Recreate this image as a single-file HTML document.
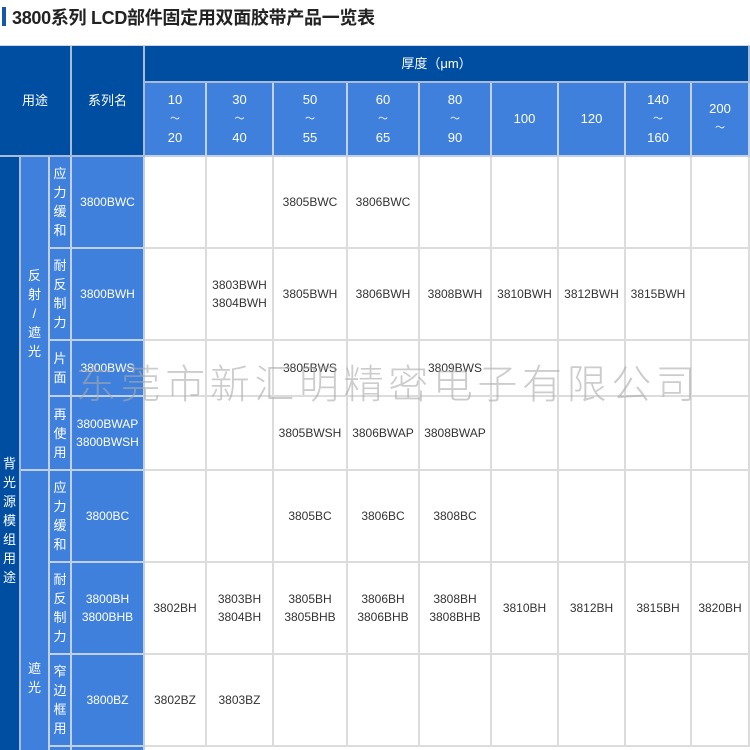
<!DOCTYPE html>
<html><head><meta charset="utf-8"><style>
html,body{margin:0;width:750px;height:750px;overflow:hidden}
body{background:#fff;position:relative;font-family:"Liberation Sans","Noto Sans CJK SC",sans-serif}
.c{position:absolute;display:flex;align-items:center;justify-content:center;text-align:center;box-sizing:border-box;border-right:2px solid #dcdcdc;border-bottom:2px solid #dcdcdc;font-size:12px;line-height:18px;color:#333}
.d{background:#004ea2;color:#fff;border-color:#a9bbd6}
.l{background:#3f80dd;color:#fff;border-color:#c2d0e6}
.v{font-size:13px;line-height:19px;word-break:break-all;padding:0 4px}
.t{position:absolute;left:12px;top:4px;font-size:18px;font-weight:bold;color:#222;letter-spacing:-0.3px}
.bar{position:absolute;left:2px;top:7px;width:4px;height:19px;background:#1456b0}
.wm{position:absolute;left:76px;top:352px;font-size:40px;letter-spacing:4.6px;color:rgba(170,170,170,0.6);white-space:nowrap;font-family:"Noto Sans CJK SC",sans-serif;font-weight:300}
s{text-decoration:none;font-size:10px}
</style></head><body>
<div class="bar"></div><div class="t">3800系列 LCD部件固定用双面胶带产品一览表</div>
<div style="position:absolute;left:0;top:45px;width:750px;height:1px;background:#cfd6e0"></div>
<div class="c d" style="left:0;top:46px;width:72px;height:111px;font-size:13px">用途</div>
<div class="c d" style="left:72px;top:46px;width:73px;height:111px;font-size:13px">系列名</div>
<div class="c d" style="left:145px;top:46px;width:605px;height:37px;font-size:13px;padding-right:20px">厚度（μm）</div>
<div class="c l" style="left:145px;top:83px;width:62px;height:74px;font-size:13px"><div>10<br><s>～</s><br>20</div></div>
<div class="c l" style="left:207px;top:83px;width:67px;height:74px;font-size:13px"><div>30<br><s>～</s><br>40</div></div>
<div class="c l" style="left:274px;top:83px;width:74px;height:74px;font-size:13px"><div>50<br><s>～</s><br>55</div></div>
<div class="c l" style="left:348px;top:83px;width:72px;height:74px;font-size:13px"><div>60<br><s>～</s><br>65</div></div>
<div class="c l" style="left:420px;top:83px;width:72px;height:74px;font-size:13px"><div>80<br><s>～</s><br>90</div></div>
<div class="c l" style="left:492px;top:83px;width:67px;height:74px;font-size:13px">100</div>
<div class="c l" style="left:559px;top:83px;width:67px;height:74px;font-size:13px">120</div>
<div class="c l" style="left:626px;top:83px;width:66px;height:74px;font-size:13px"><div>140<br><s>～</s><br>160</div></div>
<div class="c l" style="left:692px;top:83px;width:58px;height:74px;font-size:13px"><div>200<br><s>～</s></div></div>
<div class="c d v" style="left:0;top:157px;width:21px;height:600px;align-items:flex-start;padding:297px 2px 0">背光源模组用途</div>
<div class="c l v" style="left:21px;top:157px;width:29px;height:314px;padding:0 4px"><div>反<br>射<br>/<br>遮<br>光</div></div>
<div class="c l v" style="left:21px;top:471px;width:29px;height:290px;align-items:flex-start;padding:188px 6px 0">遮光</div>
<div class="c l v" style="left:50px;top:157px;width:22px;height:92px;padding:0 2px">应力缓和</div>
<div class="c l v" style="left:50px;top:249px;width:22px;height:92px;padding:0 2px">耐反制力</div>
<div class="c l v" style="left:50px;top:341px;width:22px;height:56px;padding:0 2px">片面</div>
<div class="c l v" style="left:50px;top:397px;width:22px;height:74px;padding:0 2px">再使用</div>
<div class="c l v" style="left:50px;top:471px;width:22px;height:92px;padding:0 2px">应力缓和</div>
<div class="c l v" style="left:50px;top:563px;width:22px;height:92px;padding:0 2px">耐反制力</div>
<div class="c l v" style="left:50px;top:655px;width:22px;height:92px;padding:0 2px">窄边框用</div>
<div class="c l" style="left:50px;top:747px;width:22px;height:10px"></div>
<div class="c l" style="left:72px;top:157px;width:73px;height:92px">3800BWC</div>
<div class="c l" style="left:72px;top:249px;width:73px;height:92px">3800BWH</div>
<div class="c l" style="left:72px;top:341px;width:73px;height:56px">3800BWS</div>
<div class="c l" style="left:72px;top:397px;width:73px;height:74px">3800BWAP<br>3800BWSH</div>
<div class="c l" style="left:72px;top:471px;width:73px;height:92px">3800BC</div>
<div class="c l" style="left:72px;top:563px;width:73px;height:92px">3800BH<br>3800BHB</div>
<div class="c l" style="left:72px;top:655px;width:73px;height:92px">3800BZ</div>
<div class="c l" style="left:72px;top:747px;width:73px;height:10px"></div>
<div class="c" style="left:145px;top:157px;width:62px;height:92px"></div>
<div class="c" style="left:207px;top:157px;width:67px;height:92px"></div>
<div class="c" style="left:274px;top:157px;width:74px;height:92px">3805BWC</div>
<div class="c" style="left:348px;top:157px;width:72px;height:92px">3806BWC</div>
<div class="c" style="left:420px;top:157px;width:72px;height:92px"></div>
<div class="c" style="left:492px;top:157px;width:67px;height:92px"></div>
<div class="c" style="left:559px;top:157px;width:67px;height:92px"></div>
<div class="c" style="left:626px;top:157px;width:66px;height:92px"></div>
<div class="c" style="left:692px;top:157px;width:58px;height:92px"></div>
<div class="c" style="left:145px;top:249px;width:62px;height:92px"></div>
<div class="c" style="left:207px;top:249px;width:67px;height:92px">3803BWH<br>3804BWH</div>
<div class="c" style="left:274px;top:249px;width:74px;height:92px">3805BWH</div>
<div class="c" style="left:348px;top:249px;width:72px;height:92px">3806BWH</div>
<div class="c" style="left:420px;top:249px;width:72px;height:92px">3808BWH</div>
<div class="c" style="left:492px;top:249px;width:67px;height:92px">3810BWH</div>
<div class="c" style="left:559px;top:249px;width:67px;height:92px">3812BWH</div>
<div class="c" style="left:626px;top:249px;width:66px;height:92px">3815BWH</div>
<div class="c" style="left:692px;top:249px;width:58px;height:92px"></div>
<div class="c" style="left:145px;top:341px;width:62px;height:56px"></div>
<div class="c" style="left:207px;top:341px;width:67px;height:56px"></div>
<div class="c" style="left:274px;top:341px;width:74px;height:56px">3805BWS</div>
<div class="c" style="left:348px;top:341px;width:72px;height:56px"></div>
<div class="c" style="left:420px;top:341px;width:72px;height:56px">3809BWS</div>
<div class="c" style="left:492px;top:341px;width:67px;height:56px"></div>
<div class="c" style="left:559px;top:341px;width:67px;height:56px"></div>
<div class="c" style="left:626px;top:341px;width:66px;height:56px"></div>
<div class="c" style="left:692px;top:341px;width:58px;height:56px"></div>
<div class="c" style="left:145px;top:397px;width:62px;height:74px"></div>
<div class="c" style="left:207px;top:397px;width:67px;height:74px"></div>
<div class="c" style="left:274px;top:397px;width:74px;height:74px">3805BWSH</div>
<div class="c" style="left:348px;top:397px;width:72px;height:74px">3806BWAP</div>
<div class="c" style="left:420px;top:397px;width:72px;height:74px">3808BWAP</div>
<div class="c" style="left:492px;top:397px;width:67px;height:74px"></div>
<div class="c" style="left:559px;top:397px;width:67px;height:74px"></div>
<div class="c" style="left:626px;top:397px;width:66px;height:74px"></div>
<div class="c" style="left:692px;top:397px;width:58px;height:74px"></div>
<div class="c" style="left:145px;top:471px;width:62px;height:92px"></div>
<div class="c" style="left:207px;top:471px;width:67px;height:92px"></div>
<div class="c" style="left:274px;top:471px;width:74px;height:92px">3805BC</div>
<div class="c" style="left:348px;top:471px;width:72px;height:92px">3806BC</div>
<div class="c" style="left:420px;top:471px;width:72px;height:92px">3808BC</div>
<div class="c" style="left:492px;top:471px;width:67px;height:92px"></div>
<div class="c" style="left:559px;top:471px;width:67px;height:92px"></div>
<div class="c" style="left:626px;top:471px;width:66px;height:92px"></div>
<div class="c" style="left:692px;top:471px;width:58px;height:92px"></div>
<div class="c" style="left:145px;top:563px;width:62px;height:92px">3802BH</div>
<div class="c" style="left:207px;top:563px;width:67px;height:92px">3803BH<br>3804BH</div>
<div class="c" style="left:274px;top:563px;width:74px;height:92px">3805BH<br>3805BHB</div>
<div class="c" style="left:348px;top:563px;width:72px;height:92px">3806BH<br>3806BHB</div>
<div class="c" style="left:420px;top:563px;width:72px;height:92px">3808BH<br>3808BHB</div>
<div class="c" style="left:492px;top:563px;width:67px;height:92px">3810BH</div>
<div class="c" style="left:559px;top:563px;width:67px;height:92px">3812BH</div>
<div class="c" style="left:626px;top:563px;width:66px;height:92px">3815BH</div>
<div class="c" style="left:692px;top:563px;width:58px;height:92px">3820BH</div>
<div class="c" style="left:145px;top:655px;width:62px;height:92px">3802BZ</div>
<div class="c" style="left:207px;top:655px;width:67px;height:92px">3803BZ</div>
<div class="c" style="left:274px;top:655px;width:74px;height:92px"></div>
<div class="c" style="left:348px;top:655px;width:72px;height:92px"></div>
<div class="c" style="left:420px;top:655px;width:72px;height:92px"></div>
<div class="c" style="left:492px;top:655px;width:67px;height:92px"></div>
<div class="c" style="left:559px;top:655px;width:67px;height:92px"></div>
<div class="c" style="left:626px;top:655px;width:66px;height:92px"></div>
<div class="c" style="left:692px;top:655px;width:58px;height:92px"></div>
<div class="wm">东莞市新汇明精密电子有限公司</div>
</body></html>
